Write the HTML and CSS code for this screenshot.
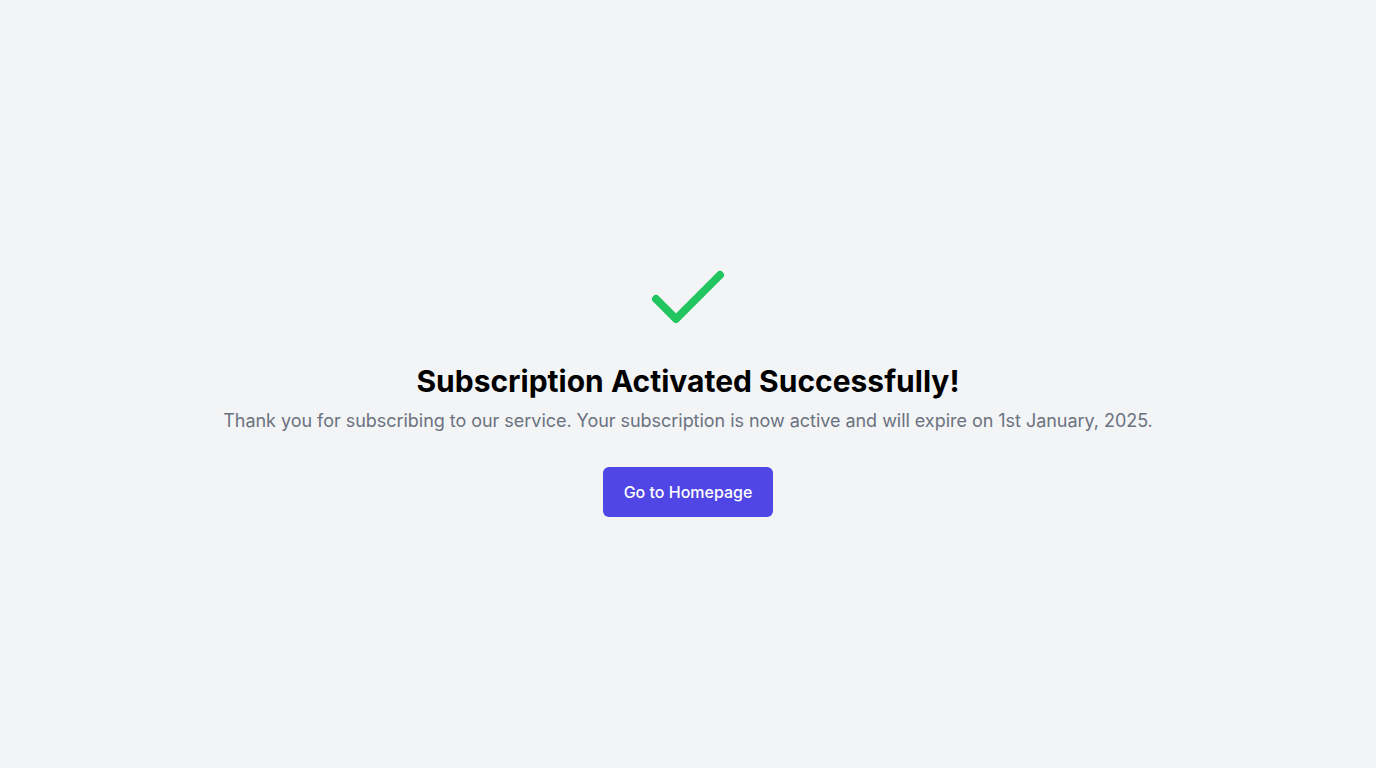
FILE: index.html
```html
<!DOCTYPE html>
<html lang="en">
<head>
<meta charset="utf-8">
<title>Subscription Activated</title>
<link rel="stylesheet" href="styles.css">
</head>
<body>
<main class="page">
  <div class="content">
    <svg class="check" viewBox="0 0 24 24" width="96" height="96" fill="none" stroke="currentColor" stroke-width="2" stroke-linecap="round" stroke-linejoin="round"><path d="M20 6 9 17l-5-5"/></svg>
    <h1 class="title">Subscription Activated Successfully!</h1>
    <p class="text">Thank you for subscribing to our service. Your subscription is now active and will expire on 1st January, 2025.</p>
    <a class="button" href="#">Go to Homepage</a>
  </div>
</main>
</body>
</html>
```

FILE: styles.css
```css
* { box-sizing: border-box; }
html, body { margin: 0; padding: 0; }
body {
  background: #f3f4f6;
  font-family: Inter, "Noto Sans", sans-serif;
  color: #000;
}
.page {
  min-height: 100vh;
  display: flex;
  align-items: center;
  justify-content: center;
}
.content {
  display: flex;
  flex-direction: column;
  align-items: center;
  text-align: center;
}
.check {
  color: #22c55e;
  display: block;
}
.title {
  margin: 16px 0 0;
  font-size: 30px;
  line-height: 36px;
  font-weight: 700;
}
.text {
  margin: 8px 0 0;
  font-size: 18px;
  line-height: 28px;
  color: #6b7280;
  letter-spacing: -0.002em;
}
.button {
  margin-top: 32px;
  display: inline-block;
  background: #4f46e5;
  color: #fff;
  text-decoration: none;
  font-size: 16px;
  line-height: 24px;
  font-weight: 500;
  padding: 13px 21px;
  border-radius: 6px;
}
```
